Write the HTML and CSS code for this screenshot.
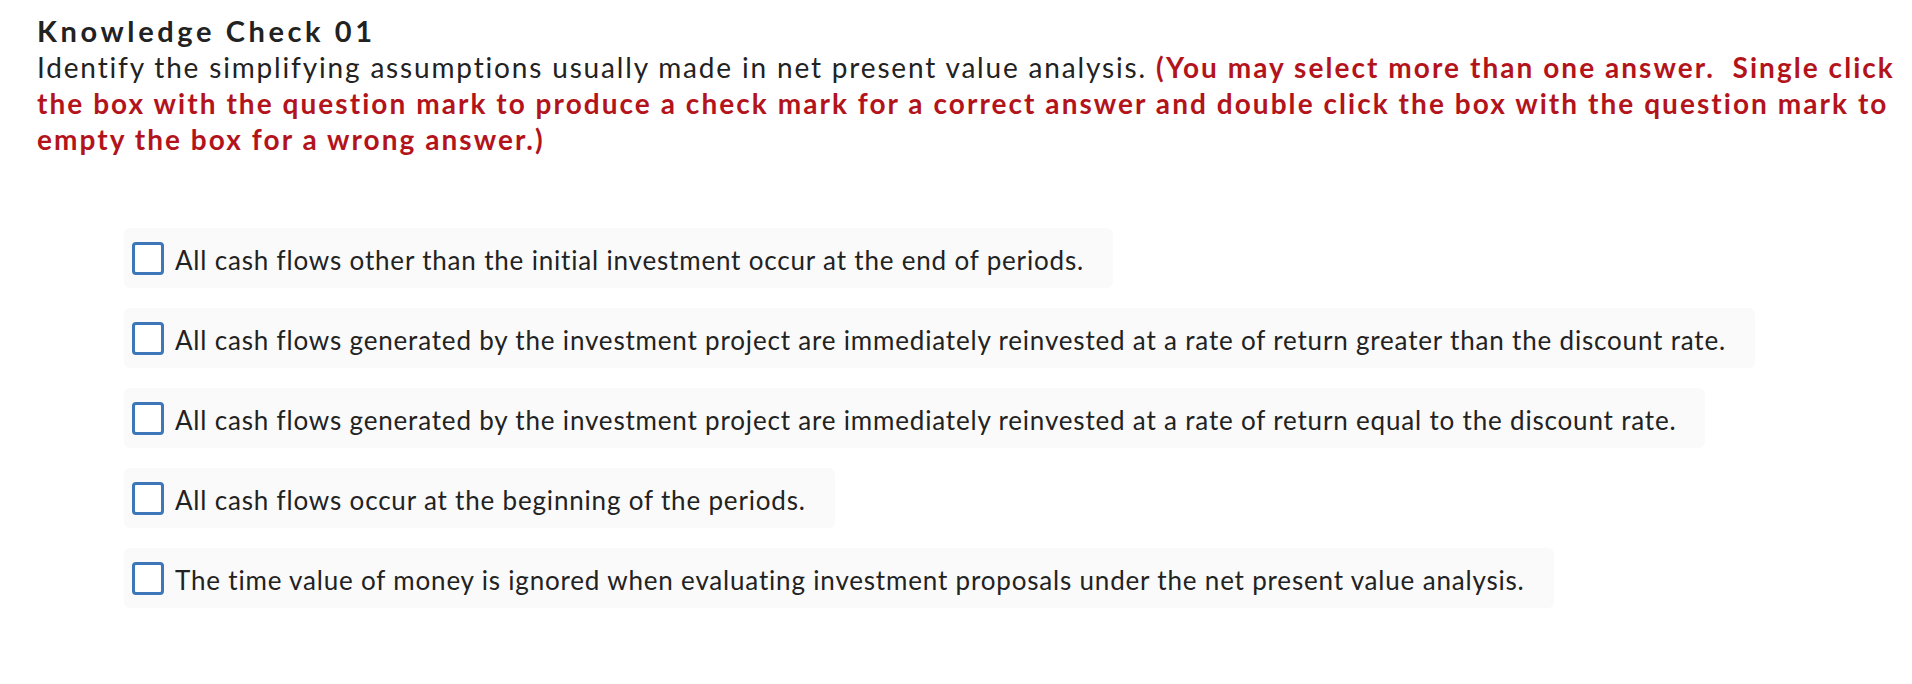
FILE: index.html
```html
<!DOCTYPE html>
<html>
<head>
<meta charset="utf-8">
<link rel="stylesheet" href="styles.css">
</head>
<body>
<div class="page">
  <div class="question">
    <div class="title">Knowledge Check 01</div>
    <div class="prompt">Identify the simplifying assumptions usually made in net present value analysis. <span class="note">(You may select more than one answer.&nbsp; Single click the box with the question mark to produce a check mark for a correct answer and double click the box with the question mark to empty the box for a wrong answer.)</span></div>
  </div>
  <div class="choices">
    <div class="choice"><span class="box"></span><span class="label">All cash flows other than the initial investment occur at the end of periods.</span></div>
    <div class="choice"><span class="box"></span><span class="label">All cash flows generated by the investment project are immediately reinvested at a rate of return greater than the discount rate.</span></div>
    <div class="choice"><span class="box"></span><span class="label">All cash flows generated by the investment project are immediately reinvested at a rate of return equal to the discount rate.</span></div>
    <div class="choice"><span class="box"></span><span class="label">All cash flows occur at the beginning of the periods.</span></div>
    <div class="choice"><span class="box"></span><span class="label">The time value of money is ignored when evaluating investment proposals under the net present value analysis.</span></div>
  </div>
</div>
</body>
</html>
```
FILE: styles.css
```css
html, body {
  margin: 0;
  padding: 0;
  background: #ffffff;
}
.page {
  font-family: Lato, "Liberation Sans", sans-serif;
  font-variant-ligatures: none;
  color: #222222;
  padding: 13px 0 0 37px;
}
.question {
  width: 1875px;
}
.title {
  font-size: 29px;
  font-weight: 700;
  line-height: 36px;
  letter-spacing: 3.6px;
}
.prompt {
  font-size: 28px;
  line-height: 36px;
  letter-spacing: 1.83px;
}
.note {
  color: #b3141b;
  font-weight: 700;
  letter-spacing: 2.05px;
}
.choices {
  display: flex;
  flex-direction: column;
  align-items: flex-start;
  gap: 20px;
  margin: 71px 0 0 87px;
}
.choice {
  display: flex;
  align-items: center;
  height: 60px;
  box-sizing: border-box;
  padding: 0 29px 0 8px;
  background: #fafafa;
  border-radius: 6px;
}
.box {
  width: 32px;
  height: 33px;
  box-sizing: border-box;
  border: 3px solid #3d76b9;
  border-radius: 4px;
  background: #fff;
  flex: none;
  margin-right: 11px;
}
.label {
  font-size: 26px;
  letter-spacing: 0.82px;
  white-space: nowrap;
  margin-top: 3px;
}
```
